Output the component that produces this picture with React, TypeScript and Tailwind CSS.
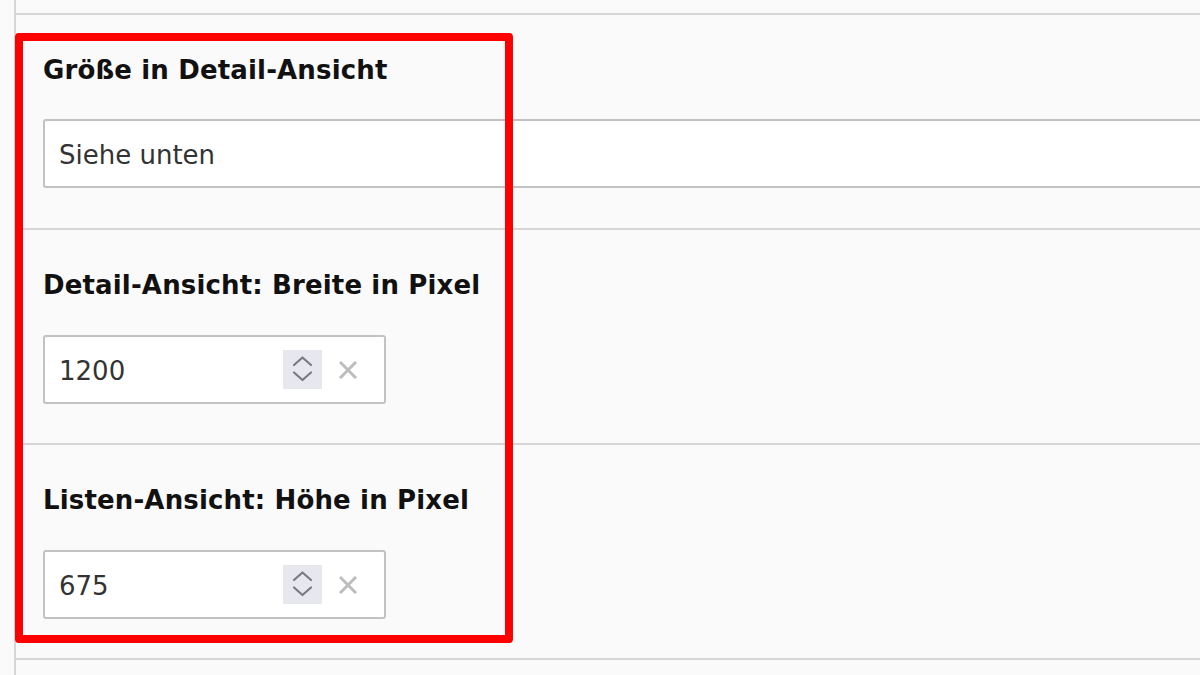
import React from "react";

function Spinner() {
  return (
    <div className="w-[39px] h-[39px] bg-[#e7e7ee] flex items-center justify-center">
      <svg width="39" height="39" viewBox="0 0 39 39" fill="none" stroke="#7a7a86" strokeWidth="2.2" strokeLinecap="round" strokeLinejoin="round">
        <polyline points="11,15 19.5,7.5 28,15" />
        <polyline points="11,22.5 19.5,30 28,22.5" />
      </svg>
    </div>
  );
}

function ClearX() {
  return (
    <div className="w-[20px] ml-[16px] mr-[26px] flex items-center justify-center">
      <svg width="18" height="18" viewBox="0 0 18 18" stroke="#bdbdbd" strokeWidth="3" strokeLinecap="square">
        <line x1="2" y1="2" x2="16" y2="16" />
        <line x1="16" y1="2" x2="2" y2="16" />
      </svg>
    </div>
  );
}

function NumberField({ value }: { value: string }) {
  return (
    <div className="mt-[35px] w-[343px] h-[69px] border-2 border-[#c2c2c2] rounded-[3px] bg-white flex items-center pl-[14px]">
      <span className="flex-1 text-[26px] text-[#333333] pt-[3px]">{value}</span>
      <Spinner />
      <ClearX />
    </div>
  );
}

function Label({ children }: { children: React.ReactNode }) {
  return <div className="text-[26px] leading-[30px] font-bold text-[#111111] tracking-[0.15px]">{children}</div>;
}

export default function App() {
  return (
    <div className="w-[1200px] h-[675px] overflow-hidden bg-[#fafafa] relative font-['DejaVu_Sans',sans-serif]">
      <div className="ml-[14px] border-l-2 border-[#d6d6d6] h-full">
        <div className="h-[15px] border-b-2 border-[#d6d6d6]" />
        <div className="h-[215px] border-b-2 border-[#d6d6d6] pl-[27px] pt-[40px]">
          <Label>Größe in Detail-Ansicht</Label>
          <div className="mt-[34px] w-[1180px] h-[69px] border-2 border-[#c2c2c2] rounded-[3px] bg-white flex items-center pl-[14px]">
            <span className="text-[26px] text-[#333333] pt-[3px]">Siehe unten</span>
          </div>
        </div>
        <div className="h-[215px] border-b-2 border-[#d6d6d6] pl-[27px] pt-[40px]">
          <Label>Detail-Ansicht: Breite in Pixel</Label>
          <NumberField value="1200" />
        </div>
        <div className="h-[215px] border-b-2 border-[#d6d6d6] pl-[27px] pt-[40px]">
          <Label>Listen-Ansicht: Höhe in Pixel</Label>
          <NumberField value="675" />
        </div>
      </div>
      <div className="absolute left-[15px] top-[33px] w-[498px] h-[610px] border-[8px] border-[#ff0000] rounded-[4px] pointer-events-none" />
    </div>
  );
}
